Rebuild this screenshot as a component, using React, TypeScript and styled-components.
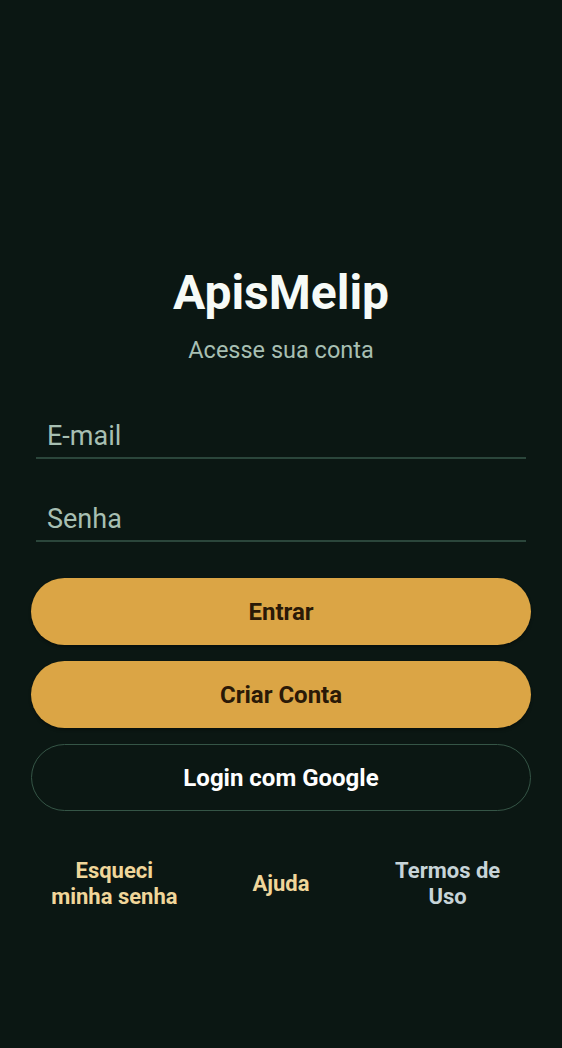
import React, { useState } from "react"
import styled, { createGlobalStyle } from "styled-components"

const GlobalStyle = createGlobalStyle`
  html, body {
    margin: 0;
    padding: 0;
    background: #0b1713;
  }
  body {
    font-family: Roboto, "Noto Sans", Arial, sans-serif;
  }
`

const Screen = styled.div`
  min-height: 1048px;
  box-sizing: border-box;
  padding: 264px 31px 0;
  display: flex;
  flex-direction: column;
  align-items: stretch;
`

const Title = styled.h1`
  margin: 0;
  text-align: center;
  font-size: 48px;
  line-height: 58px;
  font-weight: 700;
  color: #f6faf7;
`

const Subtitle = styled.p`
  margin: 14px 0 0;
  text-align: center;
  font-size: 23.5px;
  line-height: 28px;
  color: #a7bfb2;
`

const Form = styled.form`
  margin-top: 38px;
  display: flex;
  flex-direction: column;
  padding: 0 5px;
`

const Field = styled.input`
  border: none;
  border-bottom: 2px solid #2b463b;
  background: transparent;
  outline: none;
  height: 57px;
  padding: 12px 11px 0;
  box-sizing: border-box;
  font-family: inherit;
  font-size: 27px;
  color: #e8f0ec;
  margin-bottom: 26px;

  &::placeholder {
    color: #a7bfb2;
  }
`

const Actions = styled.div`
  margin-top: 10px;
  display: flex;
  flex-direction: column;
  gap: 16px;
`

const Button = styled.button<{ $outline?: boolean }>`
  height: 67px;
  padding-top: 2px;
  border-radius: 34px;
  font-family: inherit;
  font-size: 24px;
  font-weight: 700;
  cursor: pointer;
  border: ${(p) => (p.$outline ? "1.5px solid #355546" : "none")};
  background: ${(p) => (p.$outline ? "transparent" : "#dba545")};
  color: ${(p) => (p.$outline ? "#ffffff" : "#2a1907")};
  box-shadow: ${(p) => (p.$outline ? "none" : "0 2px 3px rgba(0,0,0,0.35)")};
`

const Footer = styled.div`
  margin-top: 47px;
  display: grid;
  grid-template-columns: repeat(3, 1fr);
  align-items: center;
`

const FooterLink = styled.a<{ $muted?: boolean }>`
  text-align: center;
  font-size: 22px;
  line-height: 26px;
  font-weight: 700;
  color: ${(p) => (p.$muted ? "#c7d4d8" : "#f0d69a")};
  cursor: pointer;
  text-decoration: none;
`

export default function App() {
  const [email, setEmail] = useState("")
  const [senha, setSenha] = useState("")
  return (
    <>
      <GlobalStyle />
      <Screen>
        <Title>ApisMelip</Title>
        <Subtitle>Acesse sua conta</Subtitle>
        <Form onSubmit={(e) => e.preventDefault()}>
          <Field
            type="email"
            placeholder="E-mail"
            value={email}
            onChange={(e) => setEmail(e.target.value)}
          />
          <Field
            type="password"
            placeholder="Senha"
            value={senha}
            onChange={(e) => setSenha(e.target.value)}
          />
        </Form>
        <Actions>
          <Button>Entrar</Button>
          <Button>Criar Conta</Button>
          <Button $outline>Login com Google</Button>
        </Actions>
        <Footer>
          <FooterLink>
            Esqueci
            <br />
            minha senha
          </FooterLink>
          <FooterLink>Ajuda</FooterLink>
          <FooterLink $muted>
            Termos de
            <br />
            Uso
          </FooterLink>
        </Footer>
      </Screen>
    </>
  )
}
